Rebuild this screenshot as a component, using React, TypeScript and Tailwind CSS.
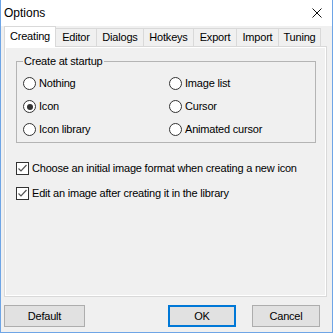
import React from "react";

const tabs = [
  { label: "Creating", w: "w-[52px]", active: true },
  { label: "Editor", w: "w-[42px]" },
  { label: "Dialogs", w: "w-[48px]" },
  { label: "Hotkeys", w: "w-[51px]" },
  { label: "Export", w: "w-[44px]" },
  { label: "Import", w: "w-[43px]" },
  { label: "Tuning", w: "w-[43px]" },
];

const radios = [
  { label: "Nothing" },
  { label: "Image list" },
  { label: "Icon", checked: true },
  { label: "Cursor" },
  { label: "Icon library" },
  { label: "Animated cursor" },
];

const Radio = ({ label, checked }: { label: string; checked?: boolean }) => (
  <div className="flex items-center h-[23px] gap-[3px]">
    <span className="w-[13px] h-[13px] rounded-full border border-[#333333] bg-white flex items-center justify-center">
      {checked && <span className="w-[6px] h-[6px] rounded-full bg-[#333333]" />}
    </span>
    <span>{label}</span>
  </div>
);

const Check = ({ label }: { label: string }) => (
  <div className="flex items-center h-[25px] gap-[3px]">
    <span className="w-[13px] h-[13px] border border-[#333333] bg-white flex items-center justify-center">
      <svg width="11" height="11" viewBox="0 0 11 11">
        <polyline points="1.5,5.5 4,8 9.5,2" fill="none" stroke="#555555" strokeWidth="1.2" />
      </svg>
    </span>
    <span>{label}</span>
  </div>
);

export default function App() {
  return (
    <div className="w-[333px] h-[333px] flex flex-col bg-[#f0f0f0] border-x border-b border-[#6ea5e6] font-['Liberation_Sans',Arial,sans-serif] text-[11px] tracking-[-0.2px] text-black">
      <div className="h-[26px] bg-white flex items-center justify-between pl-[3px] pr-[10px]">
        <span className="text-[12px] tracking-normal">Options</span>
        <svg width="10" height="10" viewBox="0 0 10 10">
          <path d="M0.5 0.5 L9.5 9.5 M9.5 0.5 L0.5 9.5" stroke="#111111" strokeWidth="1" />
        </svg>
      </div>

      <div className="h-[20px] flex items-end pl-[3px]">
        {tabs.map((t, i) =>
          t.active ? (
            <div
              key={t.label}
              className={`${t.w} h-[21px] -mb-[1px] relative z-10 bg-white border-x border-t border-[#d9d9d9] flex items-center justify-center pb-[2px]`}
            >
              {t.label}
            </div>
          ) : (
            <div
              key={t.label}
              className={`${t.w} h-[18px] ${i > 0 ? "-ml-[1px]" : ""} bg-[#f0f0f0] border-x border-t border-[#d9d9d9] flex items-center justify-center`}
            >
              {t.label}
            </div>
          )
        )}
      </div>

      <div className="ml-[3px] w-[323px] h-[251px] border border-[#d9d9d9] bg-white p-[1px]">
        <div className="h-full bg-[#f0f0f0] pt-[7px] pl-[10px]">
          <fieldset className="w-[300px] border border-[#b4b4b4] pl-[6px] pb-[1px]">
            <legend className="px-[1px] leading-[13px]">Create at startup</legend>
            <div className="grid grid-cols-[146px_1fr] mt-[4px]">
              {radios.map((r) => (
                <Radio key={r.label} label={r.label} checked={r.checked} />
              ))}
            </div>
          </fieldset>
          <div className="mt-[13px]">
            <Check label="Choose an initial image format when creating a new icon" />
            <Check label="Edit an image after creating it in the library" />
          </div>
        </div>
      </div>

      <div className="flex items-start pt-[8px] pl-[3px]">
        <button className="w-[81px] h-[22px] bg-[#e1e1e1] border border-[#adadad]">Default</button>
        <button className="w-[68px] h-[22px] ml-[83px] bg-[#e1e1e1] border-2 border-[#0078d7]">OK</button>
        <button className="w-[68px] h-[22px] ml-[16px] bg-[#e1e1e1] border border-[#adadad]">Cancel</button>
      </div>
    </div>
  );
}
